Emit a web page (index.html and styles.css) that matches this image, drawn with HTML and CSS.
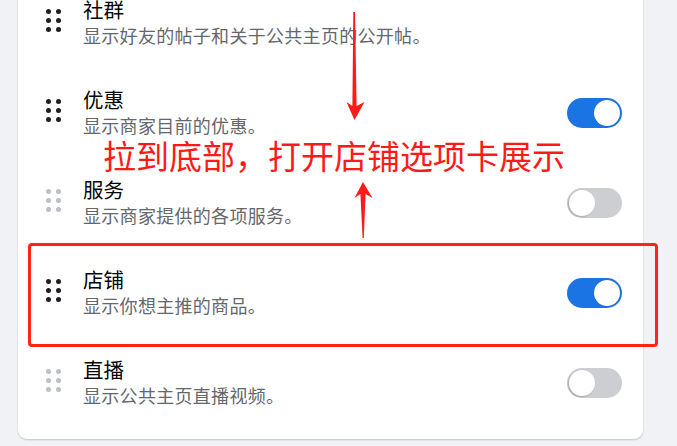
FILE: index.html
```html
<!DOCTYPE html>
<html lang="zh-CN">
<head>
<meta charset="utf-8">
<link rel="stylesheet" href="styles.css">
</head>
<body>
<div class="card">
  <div class="row">
    <span class="grip dark"><i></i><i></i><i></i><i></i><i></i><i></i></span>
    <div class="text"><div class="title">社群</div><div class="desc">显示好友的帖子和关于公共主页的公开帖。</div></div>
  </div>
  <div class="row">
    <span class="grip dark"><i></i><i></i><i></i><i></i><i></i><i></i></span>
    <div class="text"><div class="title">优惠</div><div class="desc">显示商家目前的优惠。</div></div>
    <span class="toggle on"><span class="knob"></span></span>
  </div>
  <div class="row">
    <span class="grip light"><i></i><i></i><i></i><i></i><i></i><i></i></span>
    <div class="text"><div class="title">服务</div><div class="desc">显示商家提供的各项服务。</div></div>
    <span class="toggle"><span class="knob"></span></span>
  </div>
  <div class="row">
    <span class="grip dark"><i></i><i></i><i></i><i></i><i></i><i></i></span>
    <div class="text"><div class="title">店铺</div><div class="desc">显示你想主推的商品。</div></div>
    <span class="toggle on"><span class="knob"></span></span>
  </div>
  <div class="row">
    <span class="grip light"><i></i><i></i><i></i><i></i><i></i><i></i></span>
    <div class="text"><div class="title">直播</div><div class="desc">显示公共主页直播视频。</div></div>
    <span class="toggle"><span class="knob"></span></span>
  </div>
</div>
<div class="highlight"></div>
<div class="note">拉到底部，打开店铺选项卡展示</div>
<svg class="arrows" width="677" height="446" viewBox="0 0 677 446">
  <polygon points="353.3,12 355,12 356.6,106 364.5,102 354.5,120 346.5,102 352.4,106" fill="#ff1a1a"/>
  <polygon points="363,182 372.5,198 365.6,194 363.8,238 362.6,238 360.4,194 354.5,198" fill="#ff1a1a"/>
</svg>
</body>
</html>
```
FILE: styles.css
```css
html, body {
  margin: 0;
  padding: 0;
}
body {
  background: #f0f2f5;
  width: 677px;
  height: 446px;
  overflow: hidden;
  position: relative;
  font-family: "Noto Sans CJK SC", "Noto Sans", sans-serif;
}
.card {
  margin: -23px 0 0 18px;
  width: 625px;
  background: #ffffff;
  border-radius: 0 0 9px 9px;
  box-shadow: 0 1px 2px rgba(0, 0, 0, 0.2);
  padding-bottom: 12px;
}
.row {
  height: 90px;
  display: flex;
  align-items: center;
  padding: 0 21px 0 28px;
  box-sizing: border-box;
}
.grip {
  width: 15px;
  height: 24px;
  display: grid;
  grid-template-columns: 5px 5px;
  grid-template-rows: 5px 5px 5px;
  column-gap: 5px;
  row-gap: 4px;
  margin-top: -4px;
  align-content: center;
}
.grip i {
  width: 5px;
  height: 5px;
  border-radius: 50%;
}
.grip.dark i { background: #1c1e21; }
.grip.light i { background: #bcc0c4; }
.text {
  flex: 1;
  margin-left: 22px;
}
.title {
  font-size: 20.5px;
  line-height: 26px;
  color: #050505;
}
.desc {
  font-size: 18px;
  letter-spacing: 0.3px;
  line-height: 26px;
  color: #65676b;
}
.toggle {
  width: 55px;
  height: 30px;
  border-radius: 15px;
  background: #ccced2;
  display: flex;
  align-items: center;
  padding: 0 2px;
  box-sizing: border-box;
  margin-top: 2px;
}
.toggle.on {
  background: #1b74e4;
  justify-content: flex-end;
}
.knob {
  width: 26px;
  height: 26px;
  border-radius: 50%;
  background: #ffffff;
  box-shadow: 0 0 1px rgba(0, 0, 0, 0.25);
}
.toggle:not(.on) .knob {
  box-shadow: -1px 1px 2px rgba(0, 0, 0, 0.2);
}
.highlight {
  position: absolute;
  left: 28px;
  top: 243px;
  width: 624px;
  height: 98px;
  border: 3px solid #ff2418;
  border-radius: 4px;
}
.note {
  position: absolute;
  left: 103px;
  top: 135px;
  font-size: 33px;
  line-height: 40px;
  color: #ff1a1a;
  white-space: nowrap;
}
.arrows {
  position: absolute;
  left: 0;
  top: 0;
}
```
